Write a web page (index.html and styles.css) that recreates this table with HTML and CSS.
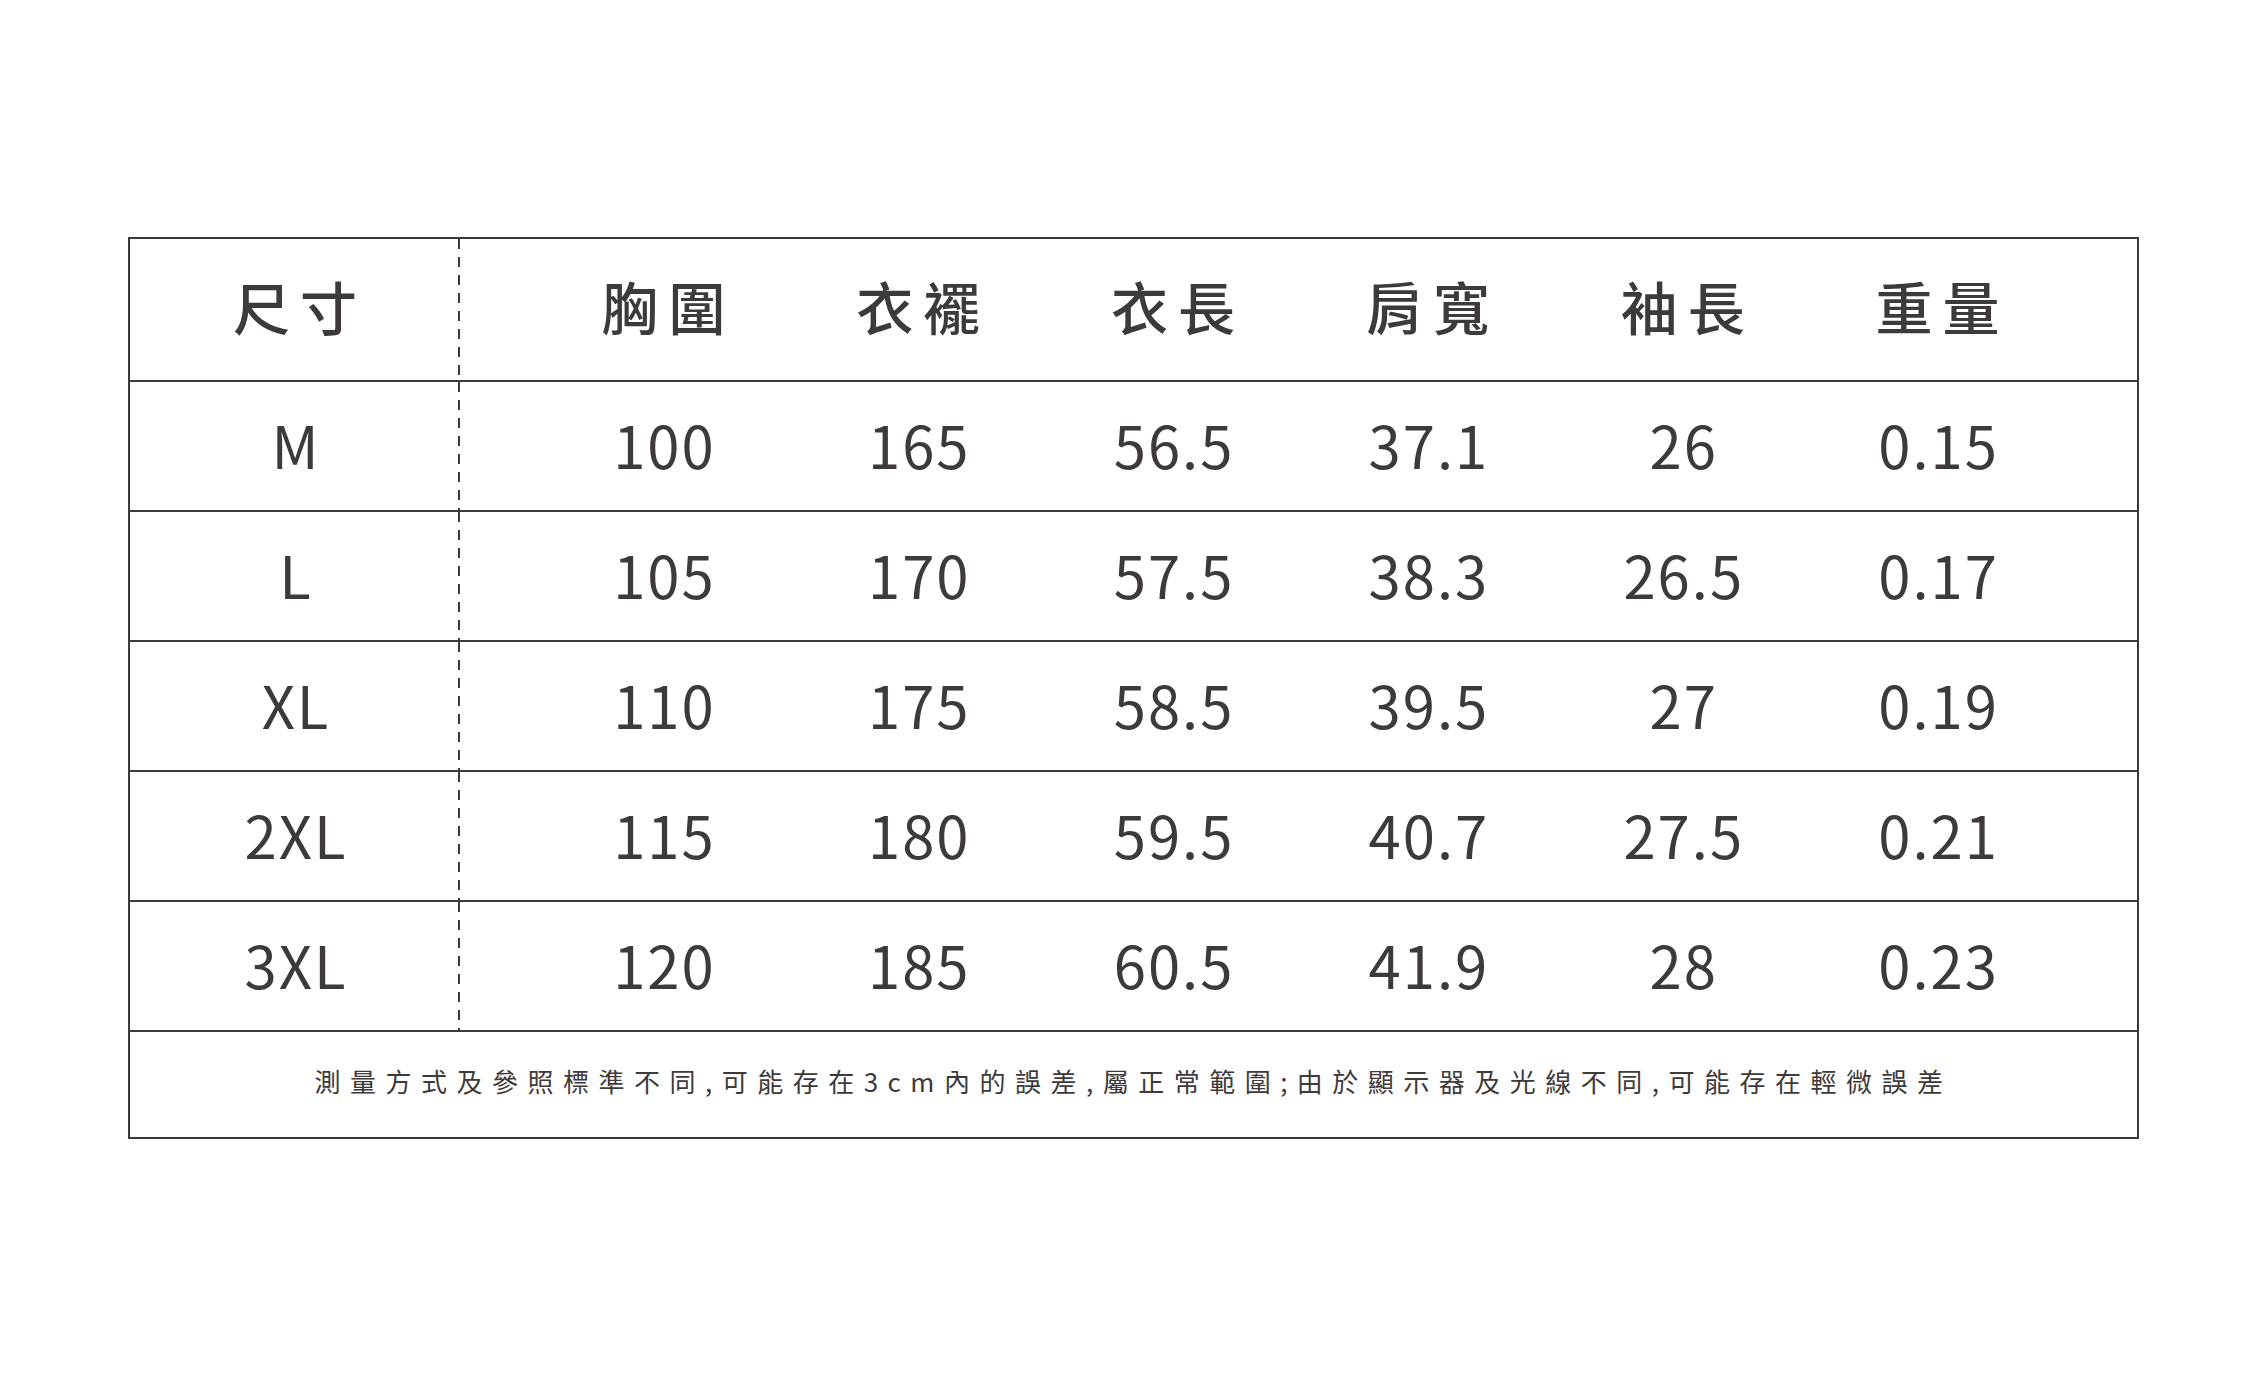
FILE: index.html
```html
<!DOCTYPE html>
<html lang="zh-Hant">
<head>
<meta charset="utf-8">
<title>尺寸表</title>
<link rel="stylesheet" href="styles.css">
</head>
<body>
<div class="page">
  <div class="chart">
    <div class="row head">
      <div class="label"><span>尺寸</span></div>
      <div class="values">
        <span>胸圍</span><span>衣襬</span><span>衣長</span><span>肩寬</span><span>袖長</span><span>重量</span>
      </div>
    </div>
    <div class="row">
      <div class="label"><span>M</span></div>
      <div class="values"><span>100</span><span>165</span><span>56.5</span><span>37.1</span><span>26</span><span>0.15</span></div>
    </div>
    <div class="row">
      <div class="label"><span>L</span></div>
      <div class="values"><span>105</span><span>170</span><span>57.5</span><span>38.3</span><span>26.5</span><span>0.17</span></div>
    </div>
    <div class="row">
      <div class="label"><span>XL</span></div>
      <div class="values"><span>110</span><span>175</span><span>58.5</span><span>39.5</span><span>27</span><span>0.19</span></div>
    </div>
    <div class="row">
      <div class="label"><span>2XL</span></div>
      <div class="values"><span>115</span><span>180</span><span>59.5</span><span>40.7</span><span>27.5</span><span>0.21</span></div>
    </div>
    <div class="row">
      <div class="label"><span>3XL</span></div>
      <div class="values"><span>120</span><span>185</span><span>60.5</span><span>41.9</span><span>28</span><span>0.23</span></div>
    </div>
    <div class="note">測量方式及參照標準不同,可能存在3cm內的誤差,屬正常範圍;由於顯示器及光線不同,可能存在輕微誤差</div>
  </div>
</div>
</body>
</html>
```

FILE: styles.css
```css
html, body {
  margin: 0;
  padding: 0;
  background: #ffffff;
}

body {
  font-family: "Noto Sans CJK TC", "Noto Sans", sans-serif;
  color: #3e3a39;
}

.page {
  width: 2268px;
  height: 1376px;
  padding: 237px 0 0 128px;
  box-sizing: border-box;
}

.chart {
  width: 2011px;
  box-sizing: border-box;
  border: 2px solid #3e3a39;
}

.row {
  display: grid;
  grid-template-columns: 330px 1fr;
  height: 130px;
  box-sizing: border-box;
  border-bottom: 2px solid #3e3a39;
}

.row.head {
  height: 143px;
}

.label {
  display: flex;
  align-items: center;
  justify-content: center;
  background-image: linear-gradient(to bottom, #3e3a39 0, #3e3a39 10px, transparent 10px, transparent 18px);
  background-size: 2px 18px;
  background-repeat: repeat-y;
  background-position: right top;
  font-size: 58px;
  letter-spacing: 2px;
  padding-bottom: 5px;
  box-sizing: border-box;
}

.label span {
  margin-right: -2px;
}

.values {
  display: grid;
  grid-template-columns: repeat(6, 1fr);
  padding: 0 72px 5px 76px;
  align-items: center;
  font-size: 58px;
  letter-spacing: 2px;
  box-sizing: border-box;
}

.values span {
  text-align: center;
  margin-right: -2px;
}

.head .label,
.head .values {
  font-size: 57px;
  font-weight: 500;
  letter-spacing: 10px;
  padding-bottom: 10px;
}

.head .label span,
.head .values span {
  margin-right: -10px;
}

.note {
  height: 105px;
  display: flex;
  align-items: center;
  justify-content: center;
  font-size: 26px;
  letter-spacing: 9.5px;
  padding-bottom: 8px;
  box-sizing: border-box;
}
```
